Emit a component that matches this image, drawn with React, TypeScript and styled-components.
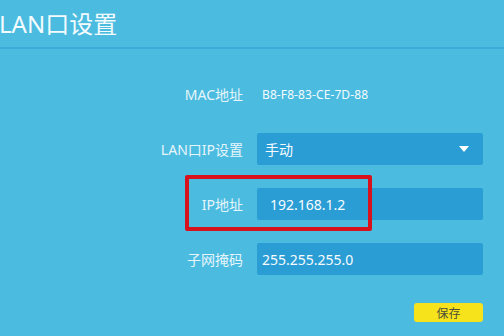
import React from "react";
import styled, { createGlobalStyle } from "styled-components";

const Global = createGlobalStyle`
  html, body { margin: 0; padding: 0; }
  body {
    background: #4bbce0;
    width: 504px;
    height: 336px;
    overflow: hidden;
    font-family: "Noto Sans", "Noto Sans CJK SC", sans-serif;
  }
`;

const Page = styled.div`
  width: 504px;
  height: 336px;
  background: #4bbce0;
  display: flex;
  flex-direction: column;
`;

const Header = styled.div`
  height: 47px;
  border-bottom: 2px solid #3fa9d9;
  display: flex;
  align-items: center;
`;

const Title = styled.h1`
  margin: 0 0 0 -1px;
  font-size: 24px;
  font-weight: 400;
  color: #f3fbfe;
  line-height: 1;
`;

const Form = styled.div`
  margin-top: 29px;
  display: grid;
  grid-template-columns: 243px 226px;
  column-gap: 14px;
  row-gap: 23px;
  grid-auto-rows: 32px;
`;

const Row = styled.div`
  display: contents;
`;

const Label = styled.div`
  position: relative;
  display: flex;
  align-items: center;
  justify-content: flex-end;
  font-size: 14px;
  color: #e6f5fb;
  white-space: nowrap;
`;

const Value = styled.div`
  display: flex;
  align-items: center;
  padding-left: 5px;
  font-size: 12px;
  color: #f4fbfe;
  letter-spacing: 0.1px;
`;

const Field = styled.div<{ $indent: number }>`
  display: flex;
  align-items: center;
  justify-content: space-between;
  background: #2b9dd5;
  border-radius: 2px;
  padding: 0 14px 0 ${(p) => p.$indent}px;
  font-size: 14px;
  color: #f6fcff;
`;

const Arrow = styled.span`
  width: 0;
  height: 0;
  border-left: 5px solid transparent;
  border-right: 5px solid transparent;
  border-top: 6px solid #ffffff;
`;

const Highlight = styled.div`
  position: absolute;
  left: 185px;
  top: -13px;
  width: 179px;
  height: 48px;
  border: 4px solid #d8121c;
  border-radius: 2px;
  pointer-events: none;
  z-index: 1;
`;

const Footer = styled.div`
  margin-top: 28px;
  display: flex;
  justify-content: flex-end;
  padding-right: 21px;
`;

const SaveButton = styled.button`
  width: 69px;
  height: 19px;
  border: none;
  border-radius: 3px;
  background: #f6e31b;
  color: #4e4e38;
  font-family: "Noto Sans CJK SC", sans-serif;
  font-size: 12px;
  line-height: 19px;
  padding: 0;
`;

export default function App() {
  return (
    <>
      <Global />
      <Page>
        <Header>
          <Title>LAN口设置</Title>
        </Header>
        <Form>
          <Row>
            <Label>MAC地址</Label>
            <Value>B8-F8-83-CE-7D-88</Value>
          </Row>
          <Row>
            <Label>LAN口IP设置</Label>
            <Field $indent={8}>
              <span>手动</span>
              <Arrow />
            </Field>
          </Row>
          <Row>
            <Label>
              IP地址
              <Highlight />
            </Label>
            <Field $indent={13}>192.168.1.2</Field>
          </Row>
          <Row>
            <Label>子网掩码</Label>
            <Field $indent={5}>255.255.255.0</Field>
          </Row>
        </Form>
        <Footer>
          <SaveButton>保存</SaveButton>
        </Footer>
      </Page>
    </>
  );
}
